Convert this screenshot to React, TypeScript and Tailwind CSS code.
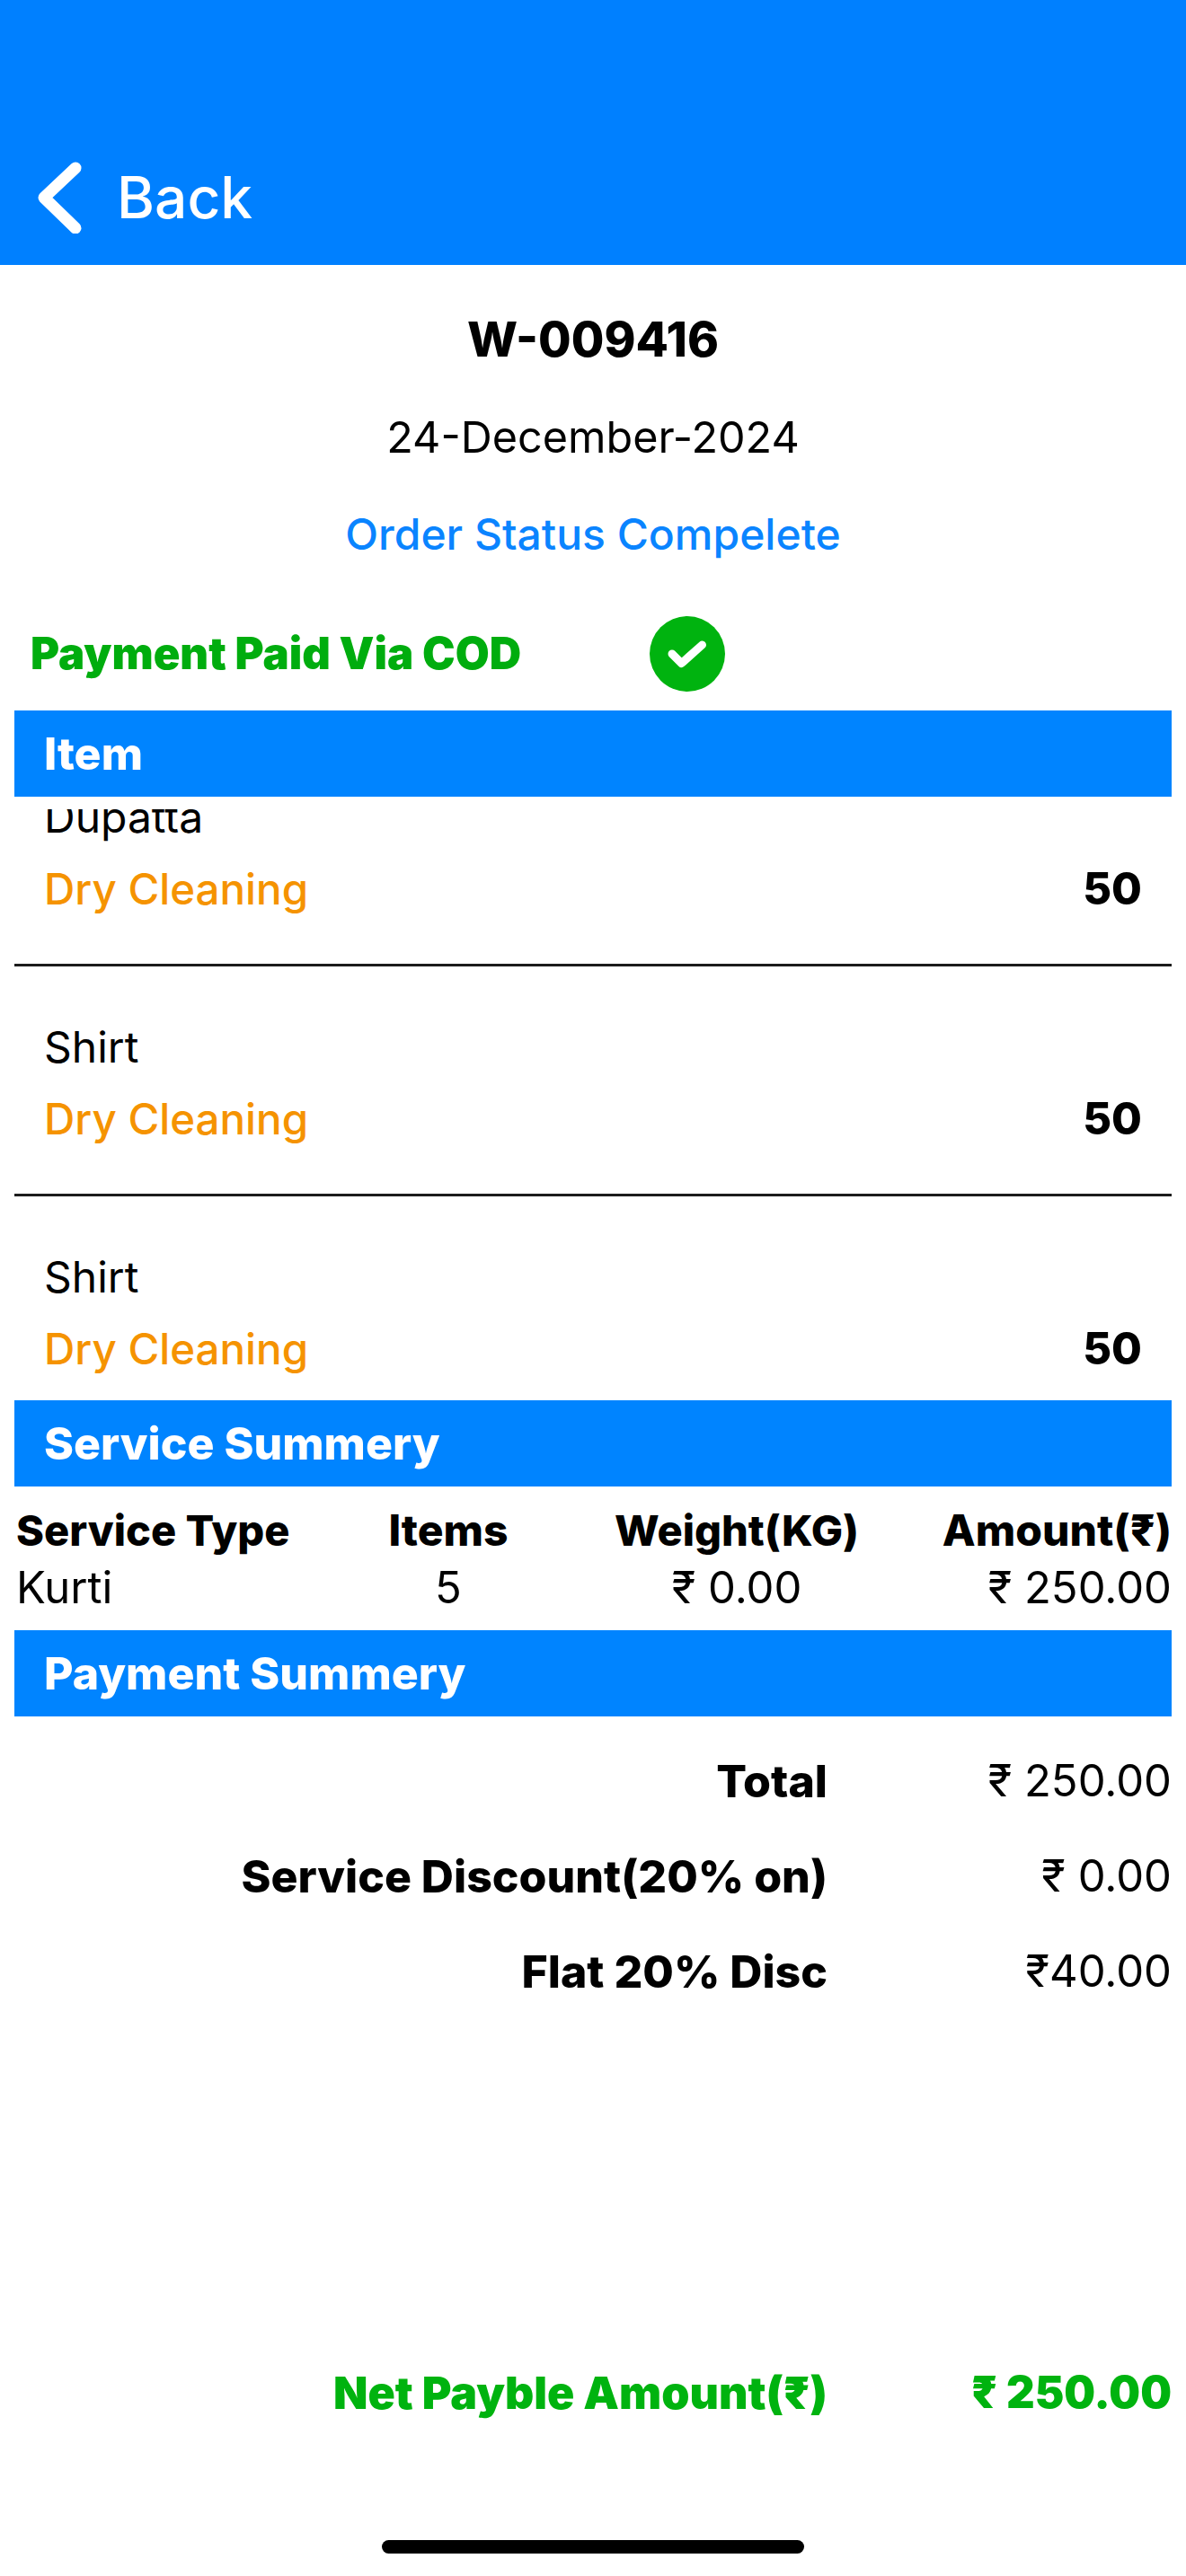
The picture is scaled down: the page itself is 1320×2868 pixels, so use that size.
const font = "font-['Inter','Liberation_Sans',sans-serif]";

function Bar({ label }: { label: string }) {
  return (
    <div className="mx-[16px] flex h-[96px] items-center bg-[#0084ff] pl-[33px] text-[50px] font-extrabold text-white">
      {label}
    </div>
  );
}

function OrderItem({ name, divider }: { name: string; divider: boolean }) {
  return (
    <div className={divider ? "h-[256px] border-b-[3px] border-[#1c1c1c]" : "h-[256px]"}>
      <div className="flex h-[253px] flex-col pt-[62px]">
        <div className="pl-[33px] text-[48px] leading-[56px] text-black">{name}</div>
        <div className="mt-[24px] flex items-center justify-between pl-[33px] pr-[33px] leading-[56px]">
          <span className="text-[47.5px] font-medium text-[#f59300]">Dry Cleaning</span>
          <span className="text-[49px] font-extrabold text-black">50</span>
        </div>
      </div>
    </div>
  );
}

function SummaryRow({ label, value, mb }: { label: string; value: string; mb: string }) {
  return (
    <div className={`flex items-center ${mb}`}>
      <div className="w-[921px] text-right text-[50px] font-extrabold leading-[56px] text-black">{label}</div>
      <div className="flex-1 pr-[16px] text-right text-[49px] leading-[56px] text-black">{value}</div>
    </div>
  );
}

export default function App() {
  return (
    <div className={`${font} flex h-[2868px] w-[1320px] flex-col overflow-hidden bg-white`}>
      <header className="flex h-[295px] items-end bg-[#0080ff] pb-[35px] pl-[42px] text-white">
        <div className="flex h-[80px] items-center gap-[36px]">
          <svg width="52" height="80" viewBox="0 0 52 80" fill="none">
            <path d="M42 7 L7 40 L42 74" stroke="white" strokeWidth="13" strokeLinecap="round" strokeLinejoin="round" />
          </svg>
          <span className="text-[64px] font-medium leading-[80px]">Back</span>
        </div>
      </header>

      <div className="mt-[53px] text-center text-[53px] font-extrabold leading-[60px] text-black">W-009416</div>
      <div className="mt-[49px] text-center text-[48.5px] leading-[60px] text-black">24-December-2024</div>
      <div className="mt-[48px] text-center text-[48px] font-medium leading-[60px] text-[#0a84ff]">Order Status Compelete</div>

      <div className="mt-[61px] flex h-[84px] items-center pl-[34px]">
        <span className="w-[689px] text-[49px] font-black text-[#00ad0e]">Payment Paid Via COD</span>
        <span className="flex h-[84px] w-[84px] items-center justify-center rounded-full bg-[#00b30f]">
          <svg width="44" height="31" viewBox="0 0 44 31" fill="none">
            <path d="M5 15 L15.5 25.5 L38.5 5" stroke="white" strokeWidth="9" strokeLinecap="round" strokeLinejoin="round" />
          </svg>
        </span>
      </div>

      <div className="mt-[21px]">
        <Bar label="Item" />
      </div>

      <div className="mx-[16px] flex h-[672px] flex-col pt-[14px]">
        <div className="min-h-0 flex-1 overflow-hidden">
          <div className="-mt-[81px]">
            <OrderItem name="Dupatta" divider />
            <OrderItem name="Shirt" divider />
            <OrderItem name="Shirt" divider={false} />
          </div>
        </div>
      </div>

      <Bar label="Service Summery" />

      <div className="mx-[16px] mt-[17px] grid grid-cols-[338px_290px_352px_1fr] leading-[64px] text-black">
        <div className="pl-[2px] text-[47px] font-extrabold">Service Type</div>
        <div className="text-center text-[48px] font-extrabold">Items</div>
        <div className="text-center text-[47px] font-extrabold">Weight(KG)</div>
        <div className="text-right text-[48px] font-extrabold">Amount(₹)</div>
        <div className="pl-[2px] text-[49px]">Kurti</div>
        <div className="text-center text-[49px]">5</div>
        <div className="text-center text-[49px]">₹ 0.00</div>
        <div className="text-right text-[49px]">₹ 250.00</div>
      </div>

      <div className="mt-[15px]">
        <Bar label="Payment Summery" />
      </div>

      <div className="mt-[44px] flex flex-col">
        <SummaryRow label="Total" value="₹ 250.00" mb="mb-[50px]" />
        <SummaryRow label="Service Discount(20% on)" value="₹ 0.00" mb="mb-[50px]" />
        <SummaryRow label="Flat 20% Disc" value="₹40.00" mb="mb-[0px]" />
      </div>

      <div className="mt-[413px] flex items-center text-[#00b30f]">
        <div className="w-[921px] text-right text-[50px] font-black leading-[56px]">Net Payble Amount(₹)</div>
        <div className="flex-1 pr-[16px] text-right text-[49px] font-black leading-[56px]">₹ 250.00</div>
      </div>

      <div className="mx-auto mt-[136px] h-[15px] w-[470px] rounded-full bg-black" />
    </div>
  );
}
